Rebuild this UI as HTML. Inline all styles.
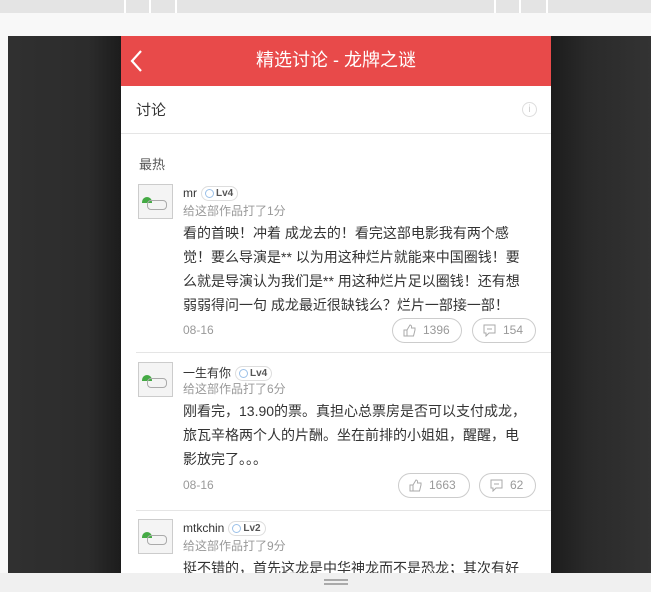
<!DOCTYPE html>
<html><head><meta charset="utf-8"><style>
*{margin:0;padding:0;box-sizing:border-box}
body{width:651px;height:592px;overflow:hidden;background:#f8f8f8;font-family:"Liberation Sans","Noto Sans CJK SC",sans-serif;position:relative}
.top{position:absolute;left:0;top:0;width:651px;height:13px;background:#e4e4e4}
.top i{position:absolute;top:0;width:2px;height:13px;background:#fff}
.stage{position:absolute;left:8px;top:36px;width:643px;height:537px;background:linear-gradient(90deg,#303030 0,#2c2c2c 80px,#1c1c1c 113px,#1c1c1c 543px,#2a2a2a 580px,#333 643px)}
.phone{position:absolute;left:121px;top:36px;width:430px;height:537px;background:#fff;overflow:hidden}
.hd{height:50px;background:#e84a4a;color:#fff;font-size:18px;text-align:center;line-height:48px;position:relative}
.hd svg{position:absolute;left:8px;top:14px}
.tab{height:48px;border-bottom:1px solid #e5e5e5;font-size:15px;color:#333;line-height:50px;padding-left:15px;position:relative}
.info{position:absolute;right:14px;top:16px;width:15px;height:15px;border:1px solid #ddd;border-radius:50%;color:#ccc;font-size:10px;line-height:13px;text-align:center}
.hot{font-size:13px;color:#555;padding:20px 0 0 18px;height:50px}
.c{position:relative;margin-left:15px;border-bottom:1px solid #e5e5e5}
.av{position:absolute;left:2px;top:0;width:35px;height:35px;border:1px solid #ccc;background:#f4f4f4}
.av:after{content:"";position:absolute;left:8px;top:15px;width:18px;height:8px;border:1.5px solid #aaa;border-radius:4px}
.av:before{content:"";position:absolute;left:3px;top:12px;width:10px;height:6px;background:#4a4;border-radius:6px 6px 0 0}
.nm{position:absolute;left:47px;top:2px;font-size:12px;color:#333}
.lv{display:inline-block;margin-left:4px;border:1px solid #ddd;border-radius:8px;font-size:10px;font-weight:bold;color:#555;padding:0 4px 0 14px;line-height:13px;position:relative;vertical-align:1px}
.lv:before{content:"";position:absolute;left:3px;top:2px;width:7px;height:7px;border-radius:50%;border:1.5px solid #9bc0e8}
.sc{position:absolute;left:47px;top:18px;font-size:12px;color:#999}
.tx{padding:37px 19px 0 47px;font-size:14px;line-height:24px;color:#333}
.ft{position:relative}
.dt{position:absolute;left:47px;top:5px;font-size:12px;color:#999}
.b{position:absolute;top:0;height:25px;border:1px solid #ccc;border-radius:13px;font-size:12px;color:#999;line-height:23px;padding-left:30px}
.b svg{position:absolute;left:10px;top:5px}
.bot{position:absolute;left:0;top:573px;width:651px;height:19px;background:#f0f0f0}
.bot i{position:absolute;left:324px;width:24px;height:2px;background:#aaa}
</style></head><body>
<div class="top"><i style="left:124px"></i><i style="left:149px"></i><i style="left:175px"></i><i style="left:494px"></i><i style="left:519px"></i><i style="left:546px"></i></div>
<div class="stage"></div>
<div class="phone">
<div class="hd"><svg width="14" height="22" viewBox="0 0 14 22"><path d="M12 1 L3 11 L12 21" stroke="#fff" stroke-width="2.2" fill="none"/></svg>精选讨论 - 龙牌之谜</div>
<div class="tab">讨论<span class="info">i</span></div>
<div class="hot">最热</div>
<div class="c" style="height:169px"><div class="av"></div><div class="nm">mr<span class="lv">Lv4</span></div><div class="sc">给这部作品打了1分</div>
<div class="tx">看的首映！冲着 成龙去的！看完这部电影我有两个感觉！要么导演是** 以为用这种烂片就能来中国圈钱！要么就是导演认为我们是** 用这种烂片足以圈钱！还有想弱弱得问一句 成龙最近很缺钱么？烂片一部接一部！</div>
<div class="ft" style="margin-top:1px"><span class="dt">08-16</span><span class="b" style="left:256px;width:70px"><svg width="13" height="13" viewBox="0 0 13 13"><path d="M1 6h3v6H1zM4 6l3-5c1 0 2 1 1.5 3H12v2l-1.5 6H4" stroke="#aaa" fill="none"/></svg>1396</span><span class="b" style="left:336px;width:64px"><svg width="13" height="13" viewBox="0 0 13 13"><path d="M1 1h11v8H6l-3 3V9H1z" stroke="#aaa" fill="none"/><path d="M4 5h5" stroke="#aaa"/></svg>154</span></div></div>
<div style="height:9px"></div>
<div class="c" style="height:149px"><div class="av"></div><div class="nm">一生有你<span class="lv">Lv4</span></div><div class="sc">给这部作品打了6分</div>
<div class="tx">刚看完，13.90的票。真担心总票房是否可以支付成龙，旅瓦辛格两个人的片酬。坐在前排的小姐姐，醒醒，电影放完了。。。</div>
<div class="ft" style="margin-top:2px"><span class="dt">08-16</span><span class="b" style="left:262px;width:72px"><svg width="13" height="13" viewBox="0 0 13 13"><path d="M1 6h3v6H1zM4 6l3-5c1 0 2 1 1.5 3H12v2l-1.5 6H4" stroke="#aaa" fill="none"/></svg>1663</span><span class="b" style="left:343px;width:57px"><svg width="13" height="13" viewBox="0 0 13 13"><path d="M1 1h11v8H6l-3 3V9H1z" stroke="#aaa" fill="none"/><path d="M4 5h5" stroke="#aaa"/></svg>62</span></div></div>
<div style="height:8px"></div>
<div class="c" style="border:0"><div class="av"></div><div class="nm">mtkchin<span class="lv">Lv2</span></div><div class="sc">给这部作品打了9分</div>
<div class="tx">挺不错的，首先这龙是中华神龙而不是恐龙；其次有好</div></div>
</div>
<div class="bot"><i style="top:6px"></i><i style="top:10px"></i></div>
</body></html>
